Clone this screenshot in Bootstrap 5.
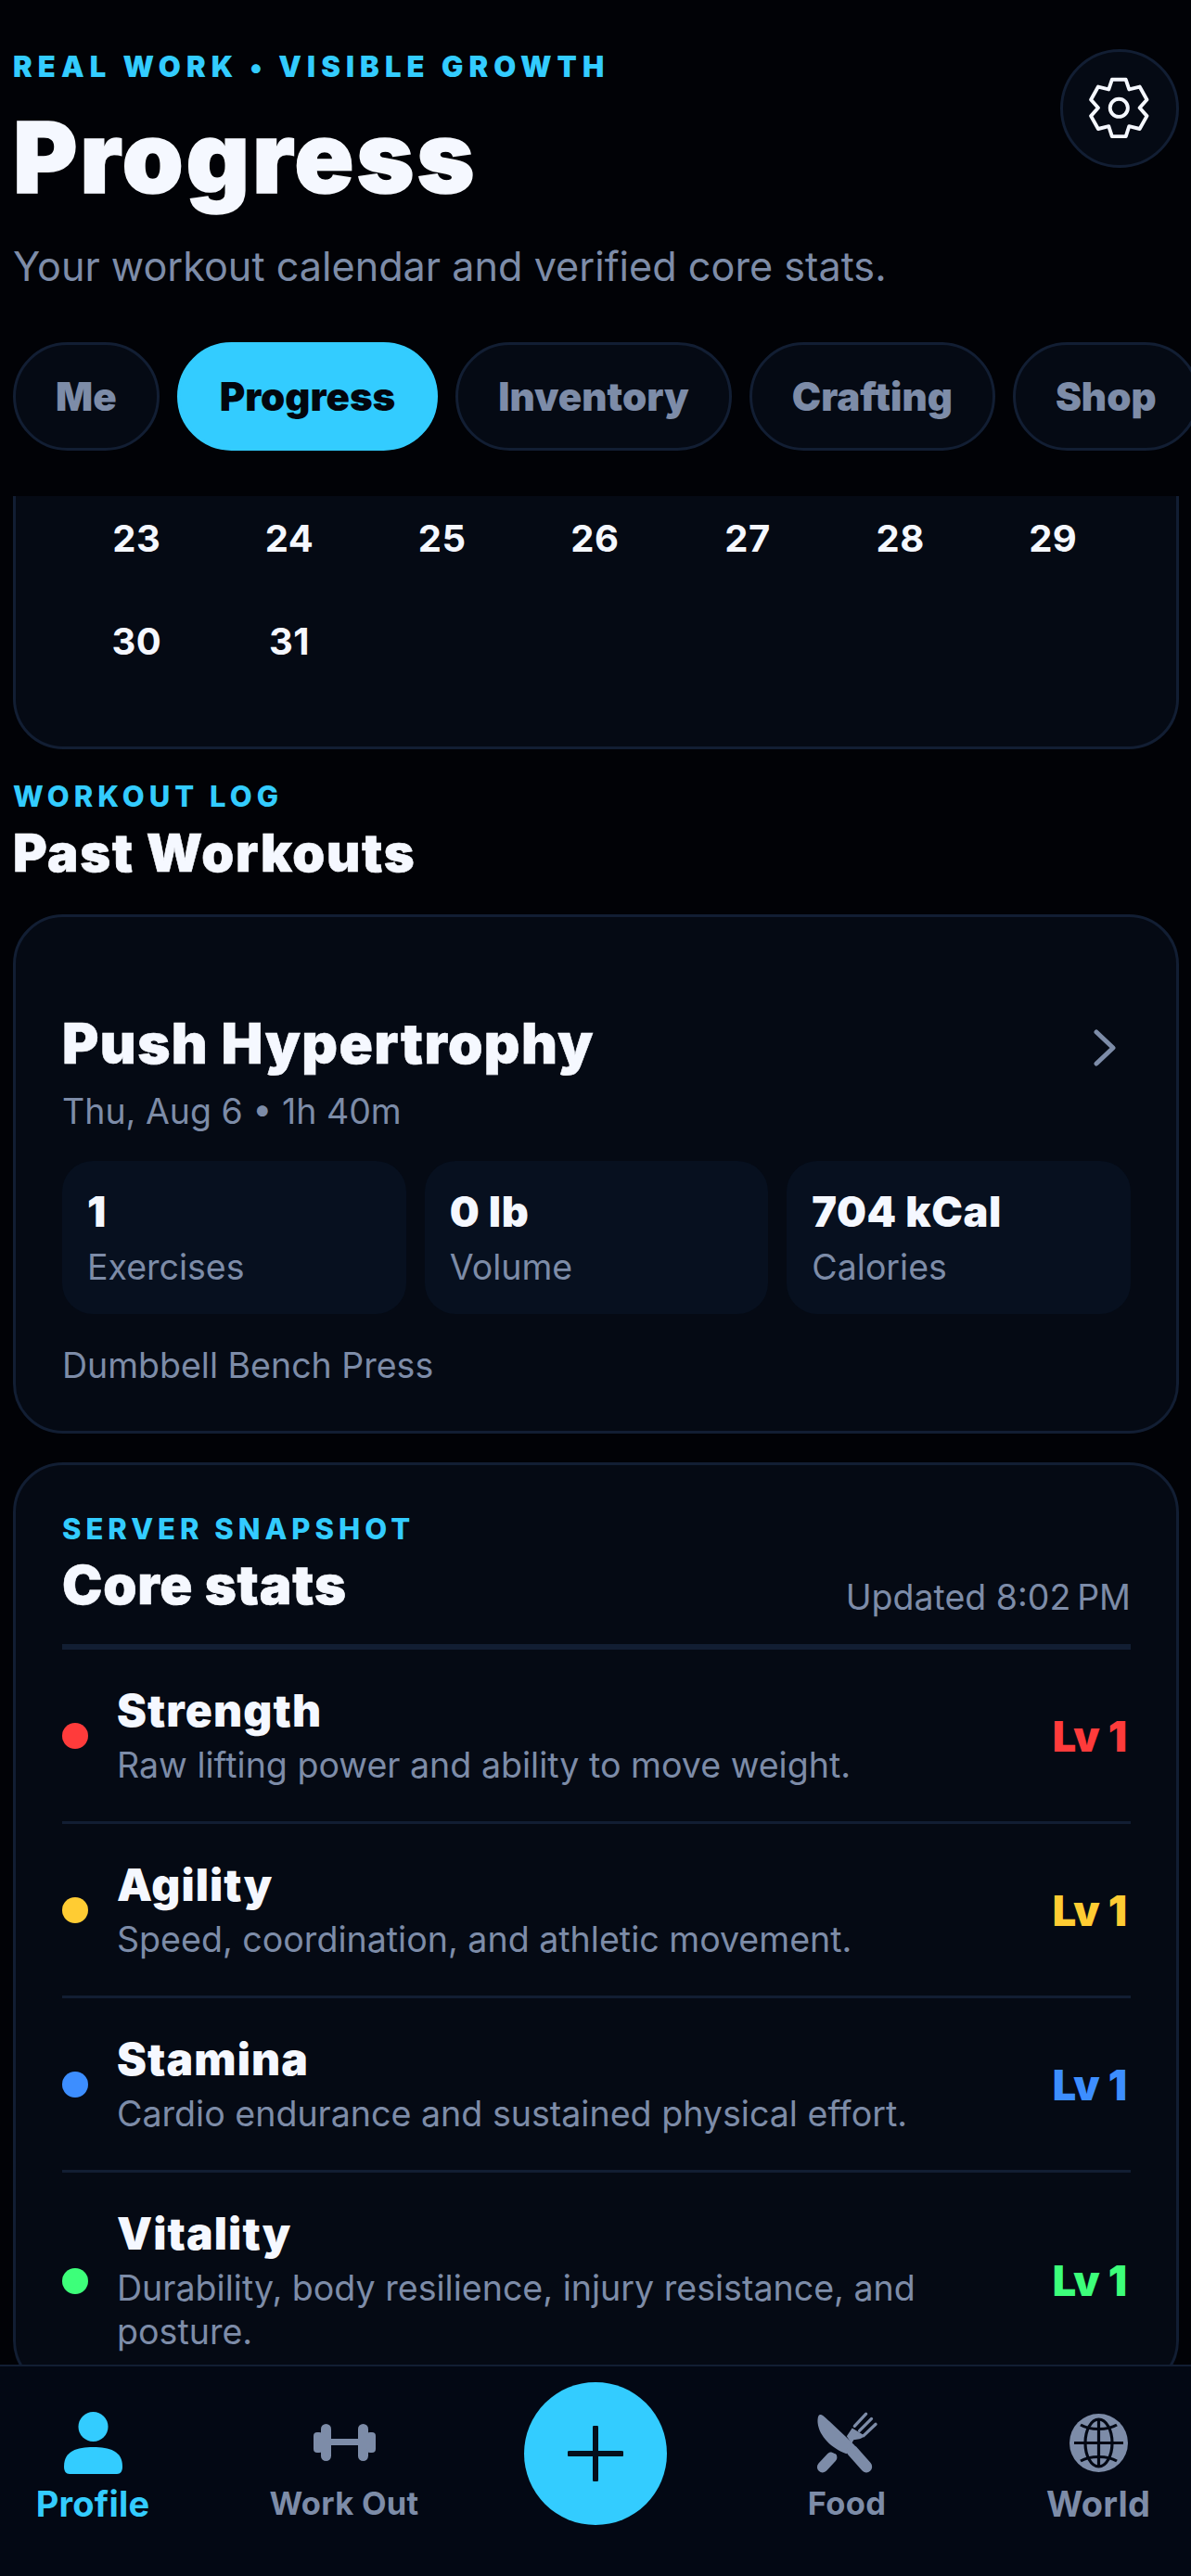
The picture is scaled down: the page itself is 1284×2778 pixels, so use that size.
<!DOCTYPE html>
<html lang="en">
<head>
  <meta charset="UTF-8">
  <title>Progress</title>
  <meta name="viewport" content="width=device-width, initial-scale=1">
  <link href="https://cdn.jsdelivr.net/npm/bootstrap@5.3.0/dist/css/bootstrap.min.css" rel="stylesheet">
  <style>
    body { background: #010206; color: #f5f8ff; font-family: Inter, "Liberation Sans", sans-serif; height: 2778px; overflow: hidden; }
    .app-shell { height: 2778px; }
    .eyebrow { color: #33ccff; font-size: 31px; line-height: 36px; font-weight: 800; letter-spacing: 5px; }
    .top-head { padding: 52px 13px 0 14px; }
    .top-eyebrow { line-height: 40px; font-weight: 900; letter-spacing: 6.1px; }
    .page-title { font-size: 106px; line-height: 110px; font-weight: 900; letter-spacing: 2.7px; -webkit-text-stroke: 1.5px #f5f8ff; margin: 23px 0 0; }
    .page-sub { color: #7d8ca8; font-size: 43.2px; line-height: 56px; margin: 34px 0 0; }
    .gear-btn { width: 128px; height: 128px; background: #050a14; border: 3px solid #121e33; margin-top: 1px; flex: none; padding: 0; }
    .pill-row { padding: 54px 0 51px 14px; gap: 19px; flex-wrap: nowrap; overflow: hidden; }
    .pill-btn { height: 117px; padding: 0 43px; font-size: 42px; font-weight: 900; color: #7d8ca8; background: #050a14; border: 3px solid #121e33; white-space: nowrap; flex: none; }
    .pill-btn.active { background: #33ccff; border-color: #33ccff; color: #02060e; }
    .scroll-area { padding: 0 13px 0 14px; overflow: hidden; min-height: 0; }
    .panel { background: #050a14; border: 3px solid #121e33; border-radius: 54px; color: #f5f8ff; flex: none; }
    .cal-panel { height: 273px; border-top: 0; border-top-left-radius: 0; border-top-right-radius: 0; overflow: hidden; padding: 0 0 0 48px; }
    .cal-grid { display: grid; grid-template-columns: repeat(7, 164.67px); grid-auto-rows: 111px; margin-top: -10px; }
    .cal-day { font-size: 40px; font-weight: 700; letter-spacing: .5px; }
    .log-eyebrow { margin-top: 33px; }
    .section-title { font-size: 56px; line-height: 64px; font-weight: 900; margin: 11px 0 34px; letter-spacing: 1.7px; -webkit-text-stroke: .6px #f5f8ff; }
    .workout-panel { padding: 101px 49px 46px 50px; margin-bottom: 31px; }
    .workout-title { font-size: 60px; line-height: 70px; font-weight: 900; letter-spacing: 1.4px; -webkit-text-stroke: .6px #f5f8ff; margin: 0; }
    .workout-chevron { margin-top: 10px; }
    .muted-line { color: #7d8ca8; font-size: 37.5px; line-height: 48px; }
    .workout-meta { margin-top: 15px; }
    .stat-tiles { gap: 20px; margin: 29px 0 32px; }
    .stat-tile { background: #07101f; border-radius: 33px; height: 165px; padding: 28px 27px 0; flex: 1 1 0; }
    .tile-value { font-size: 45px; line-height: 54px; font-weight: 900; letter-spacing: .6px; }
    .tile-label { margin-top: 9px; }
    .stats-panel { padding: 51px 49px 0 50px; }
    .stats-title { font-size: 58px; line-height: 66px; font-weight: 900; letter-spacing: .8px; -webkit-text-stroke: .6px #f5f8ff; margin: 9px 0 31px; }
    .stats-updated { margin-top: 32px; }
    .stats-list { --bs-list-group-bg: transparent; --bs-list-group-color: #f5f8ff; }
    .stats-list .stat-item { display: flex; align-items: center; padding: 38px 4px 37px 0; border: 0; border-top: 3px solid #121e33; }
    .stat-dot { width: 28px; height: 28px; flex: none; margin-right: 31px; }
    .stat-name { font-size: 48px; line-height: 56px; font-weight: 900; letter-spacing: 1.1px; }
    .stat-desc { color: #7d8ca8; font-size: 37.6px; line-height: 47px; margin-top: 7px; }
    .stat-lv { font-size: 45px; font-weight: 900; white-space: nowrap; flex: none; margin-left: 20px; }
    .tone-red { color: #ff3b3b; } .dot-red { background: #ff3b3b; }
    .tone-yellow { color: #ffcc33; } .dot-yellow { background: #ffcc33; }
    .tone-blue { color: #3d8eff; } .dot-blue { background: #3d8eff; }
    .tone-green { color: #3dff7a; } .dot-green { background: #3dff7a; }
    .tab-bar { height: 228px; flex: none; background: #030814; border-top: 2px solid #121e33; }
    .tab-item { width: 200px; padding-top: 46px; color: #7d8ca8; }
    .tab-icon { height: 72px; }
    .tab-label { font-size: 34.5px; line-height: 44px; font-weight: 700; margin-top: 8px; letter-spacing: .3px; }
    .tab-label-lg { font-size: 38px; letter-spacing: .2px; }
    .tab-on { color: #33ccff; }
    .fab-btn { width: 154px; height: 154px; background: #33ccff; margin-top: 17px; padding: 0; border: 0; }
  </style>
</head>
<body>
  <div class="app-shell d-flex flex-column">

    <!-- Header -->
    <div class="top-head d-flex justify-content-between align-items-start">
      <div>
        <div class="eyebrow top-eyebrow">REAL WORK • VISIBLE GROWTH</div>
        <h1 class="page-title">Progress</h1>
        <p class="page-sub">Your workout calendar and verified core stats.</p>
      </div>
      <button class="gear-btn btn rounded-circle d-flex align-items-center justify-content-center" aria-label="Settings">
        <svg width="66" height="68" viewBox="170 170 186 190" fill="none" stroke="#f5f8ff" stroke-width="11" stroke-linejoin="round">
          <path d="M240 177H282L292 207L324 199L346 238L324 263L346 288L324 327L292 319L282 350H240L230 319L198 327L176 288L198 263L176 238L198 199L230 207Z"/>
          <circle cx="261" cy="263" r="27"/>
        </svg>
      </button>
    </div>

    <ul class="nav pill-row">
      <li class="nav-item"><a class="pill-btn btn rounded-pill d-flex align-items-center" href="#">Me</a></li>
      <li class="nav-item"><a class="pill-btn btn rounded-pill d-flex align-items-center active" href="#">Progress</a></li>
      <li class="nav-item"><a class="pill-btn btn rounded-pill d-flex align-items-center" href="#">Inventory</a></li>
      <li class="nav-item"><a class="pill-btn btn rounded-pill d-flex align-items-center" href="#">Crafting</a></li>
      <li class="nav-item"><a class="pill-btn btn rounded-pill d-flex align-items-center" href="#">Shop</a></li>
    </ul>

    <!-- Scrolled content -->
    <div class="scroll-area flex-grow-1 d-flex flex-column">
      <div class="card panel cal-panel">
        <div class="cal-grid" id="cal-grid"></div>
      </div>

      <div class="eyebrow log-eyebrow">WORKOUT LOG</div>
      <h2 class="section-title">Past Workouts</h2>

      <div class="card panel workout-panel">
        <div class="d-flex justify-content-between align-items-center">
          <h3 class="workout-title">Push Hypertrophy</h3>
          <svg class="me-3 workout-chevron" width="24" height="40" viewBox="0 0 24 40" fill="none" stroke="#7d8ca8" stroke-width="5" stroke-linecap="round" stroke-linejoin="round"><path d="M3 3L21 20L3 37"/></svg>
        </div>
        <div class="muted-line workout-meta">Thu, Aug 6 • 1h 40m</div>
        <div class="stat-tiles d-flex">
          <div class="stat-tile"><div class="tile-value">1</div><div class="muted-line tile-label">Exercises</div></div>
          <div class="stat-tile"><div class="tile-value">0 lb</div><div class="muted-line tile-label">Volume</div></div>
          <div class="stat-tile"><div class="tile-value">704 kCal</div><div class="muted-line tile-label">Calories</div></div>
        </div>
        <div class="muted-line">Dumbbell Bench Press</div>
      </div>

      <div class="card panel stats-panel">
        <div class="eyebrow">SERVER SNAPSHOT</div>
        <div class="d-flex justify-content-between align-items-start">
          <h3 class="stats-title">Core stats</h3>
          <div class="muted-line stats-updated">Updated 8:02&#8239;PM</div>
        </div>
        <ul class="list-group list-group-flush stats-list" id="stats-list"></ul>
      </div>
    </div>

    <!-- Bottom tab bar -->
    <nav class="tab-bar d-flex justify-content-between">
      <a class="tab-item tab-on d-flex flex-column align-items-center text-decoration-none" href="#">
        <span class="tab-icon d-flex align-items-center">
          <svg width="63" height="68" viewBox="0 0 63 68" fill="#33ccff"><circle cx="31.5" cy="17" r="16"/><path d="M0 60C0 43 14 39 31.5 39S63 43 63 60C63 65 61 68 57 68H6C2 68 0 65 0 60Z"/></svg>
        </span>
        <span class="tab-label tab-label-lg">Profile</span>
      </a>
      <a class="tab-item d-flex flex-column align-items-center text-decoration-none" href="#">
        <span class="tab-icon d-flex align-items-center">
          <svg width="67" height="40" viewBox="0 0 67 40" fill="#7d8ca8"><rect x="0" y="9" width="10" height="22" rx="4"/><rect x="8" y="0" width="11" height="40" rx="5.5"/><rect x="17" y="16" width="33" height="7"/><rect x="48" y="0" width="11" height="40" rx="5.5"/><rect x="57" y="9" width="10" height="22" rx="4"/></svg>
        </span>
        <span class="tab-label">Work Out</span>
      </a>
      <div class="tab-item d-flex flex-column align-items-center p-0">
        <button class="fab-btn btn rounded-circle d-flex align-items-center justify-content-center" aria-label="Add">
          <svg width="60" height="60" viewBox="0 0 60 60" stroke="#04101c" stroke-width="6" stroke-linecap="round"><path d="M30 2V58M2 30H58"/></svg>
        </button>
      </div>
      <a class="tab-item d-flex flex-column align-items-center text-decoration-none" href="#">
        <span class="tab-icon d-flex align-items-center">
          <svg width="70" height="70" viewBox="295 175 215 215">
            <path fill="#7d8ca8" d="M314 190C322 190 330 198 345 213L402 266L428 292L401 320C352 302 311 262 306 218C305 203 307 191 314 190Z"/>
            <path stroke="#7d8ca8" stroke-width="38" stroke-linecap="round" d="M420 310L467 363"/>
            <path stroke="#7d8ca8" stroke-width="36" stroke-linecap="round" d="M322 364L352 332"/>
            <path stroke="#030814" stroke-width="6" fill="none" d="M340 303C355 315 375 322 392 322"/>
            <path fill="#7d8ca8" d="M402 262L420 235L462 260C450 272 438 272 425 274L418 286Z"/>
            <path stroke="#7d8ca8" stroke-width="10" stroke-linecap="round" d="M466 188L428 228M484 204L444 244M498 222L458 260"/>
          </svg>
        </span>
        <span class="tab-label">Food</span>
      </a>
      <a class="tab-item d-flex flex-column align-items-center text-decoration-none" href="#">
        <span class="tab-icon d-flex align-items-center">
          <svg width="63" height="63" viewBox="0 0 63 63"><circle cx="31.5" cy="31.5" r="31.5" fill="#7d8ca8"/><g fill="none" stroke="#030814" stroke-width="3.2"><path d="M5 31.5H58M31.5 5V58"/><ellipse cx="31.5" cy="31.5" rx="14.5" ry="25.5"/><path d="M12 12C22 18 41 18 51 12M12 51C22 45 41 45 51 51"/></g></svg>
        </span>
        <span class="tab-label tab-label-lg">World</span>
      </a>
    </nav>
  </div>

  <script src="https://cdn.jsdelivr.net/npm/bootstrap@5.3.0/dist/js/bootstrap.bundle.min.js"></script>
  <script>
    // Calendar cells still visible after the scroll
    const calGrid = document.getElementById("cal-grid");
    [23, 24, 25, 26, 27, 28, 29, 30, 31].forEach(d => {
      calGrid.innerHTML += `<div class="cal-day d-flex align-items-center justify-content-center">${d}</div>`;
    });

    const stats = [
      { name: "Strength", desc: "Raw lifting power and ability to move weight.", tone: "red" },
      { name: "Agility", desc: "Speed, coordination, and athletic movement.", tone: "yellow" },
      { name: "Stamina", desc: "Cardio endurance and sustained physical effort.", tone: "blue" },
      { name: "Vitality", desc: "Durability, body resilience, injury resistance, and posture.", tone: "green" }
    ];
    const statsList = document.getElementById("stats-list");
    stats.forEach(s => {
      statsList.innerHTML += `
        <li class="list-group-item stat-item">
          <span class="stat-dot rounded-circle dot-${s.tone}"></span>
          <div class="flex-grow-1">
            <div class="stat-name">${s.name}</div>
            <div class="stat-desc">${s.desc}</div>
          </div>
          <span class="stat-lv tone-${s.tone}">Lv 1</span>
        </li>`;
    });
  </script>
</body>
</html>
